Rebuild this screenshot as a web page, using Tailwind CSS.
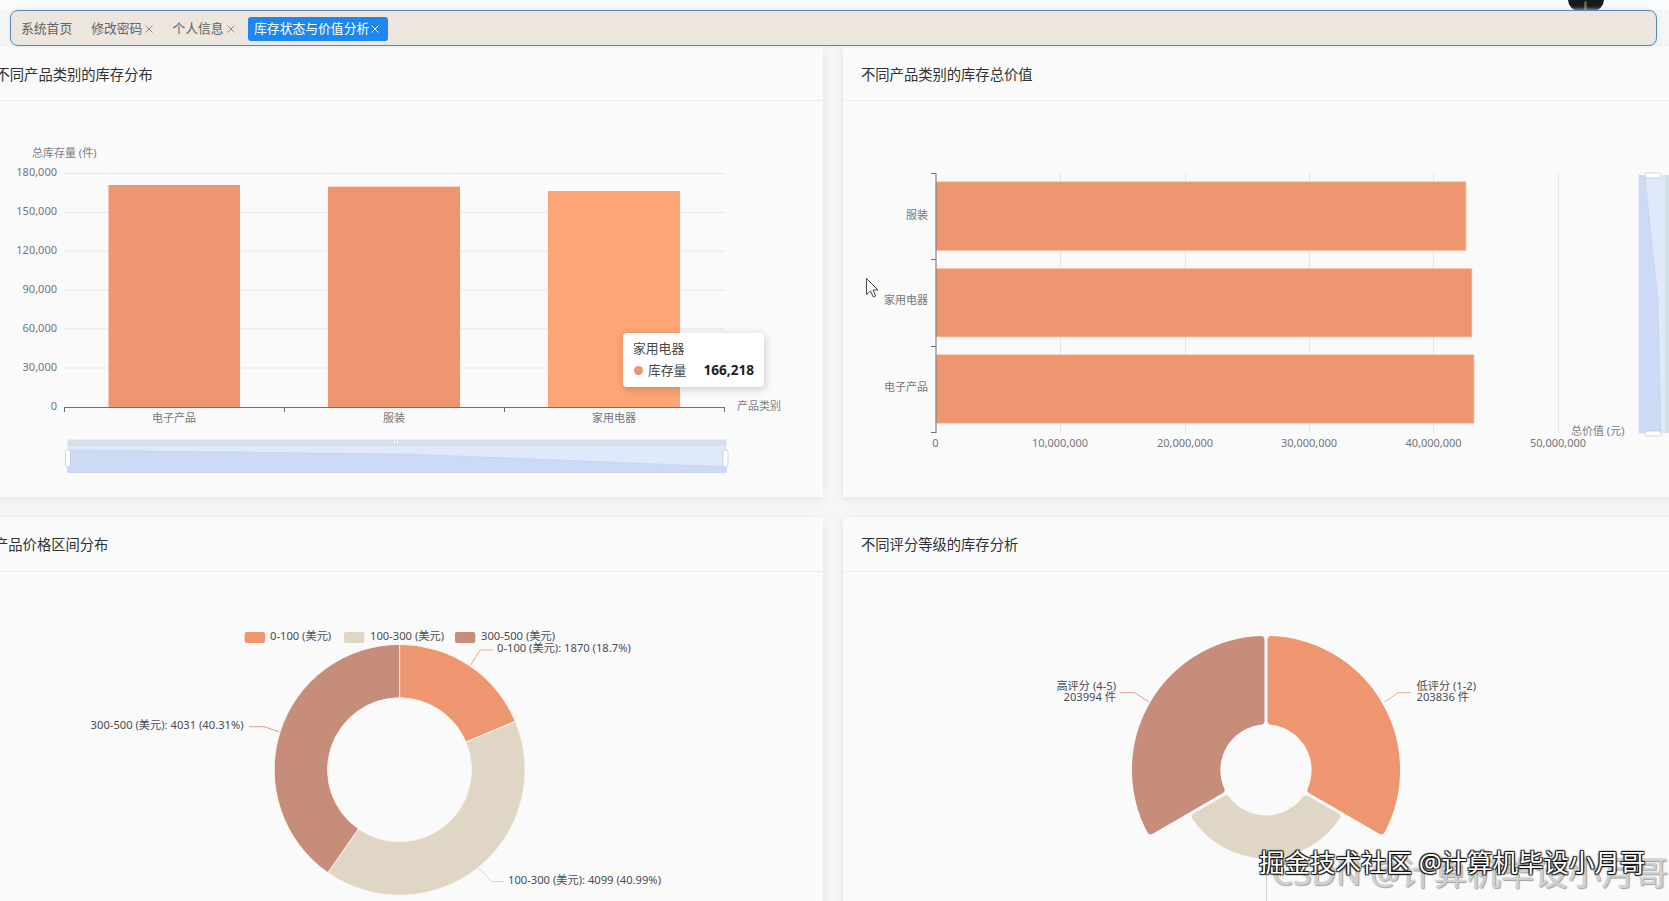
<!DOCTYPE html>
<html lang="zh-CN">
<head>
    <meta charset="UTF-8">
    <title>库存状态与价值分析</title>
    <script src="https://cdn.jsdelivr.net/npm/@tailwindcss/browser@4"></script>
</head>
<body class="relative h-[901px] w-[1669px] overflow-hidden bg-[#f6f6f6] font-['Noto_Sans','Noto_Sans_CJK_SC',sans-serif]">
    <!-- Avatar peeking out above the tab bar -->
    <div class="absolute left-[1568px] top-[-12px] h-[23px] w-[36px] rounded-full bg-[#17191a]"></div>
    <div class="absolute left-[1584px] top-[1px] h-[9px] w-[3px] rounded-full bg-[#5c6248]"></div>

    <!-- Tab bar -->
    <div class="h-[10px] bg-[#f9fbfd]"></div>
    <nav class="relative z-10 ml-[10px] flex h-[36px] w-[1647px] items-center gap-[7px] rounded-lg border border-[#5f86b5] bg-[#ece6de] pl-[4px] pt-[1px] text-[12.8px] text-[#5f6368] shadow-[0_0_4px_#d3e6f6]">
        <span class="px-[6px]">系统首页</span>
        <span class="flex items-center gap-[3px] px-[6px]">修改密码
            <svg class="h-[8px] w-[8px]" viewBox="0 0 8 8"><path d="M0.5 0.5 7.5 7.5M7.5 0.5 0.5 7.5" stroke="#8a8d91"/></svg>
        </span>
        <span class="flex items-center gap-[3px] px-[6px]">个人信息
            <svg class="h-[8px] w-[8px]" viewBox="0 0 8 8"><path d="M0.5 0.5 7.5 7.5M7.5 0.5 0.5 7.5" stroke="#8a8d91"/></svg>
        </span>
        <span class="flex h-[24px] items-center gap-[2px] rounded-[3px] bg-[#1b87ef] pl-[6.5px] pr-[8.5px] text-white">库存状态与价值分析
            <svg class="h-[8px] w-[8px]" viewBox="0 0 8 8"><path d="M0.5 0.5 7.5 7.5M7.5 0.5 0.5 7.5" stroke="#ffffff"/></svg>
        </span>
    </nav>

    <!-- Cards -->
    <main class="ml-[-20px] grid w-[1706px] grid-cols-[843px_843px] grid-rows-[451px_451px] gap-[20px]">
        <!-- Stock by category -->
        <section class="relative bg-[#fafafa] shadow-[0_2px_8px_rgba(0,0,0,0.08)]">
            <h2 class="flex h-[55px] items-center border-b border-[#ebeef5] pl-[15.5px] pt-[4px] text-[14.3px] font-normal text-[#303133]">不同产品类别的库存分布</h2>
            <svg class="block text-[11px]" width="843" height="396" viewBox="-20 101 843 396">
                <path d="M64 173.500H724.500M64 212.500H724.500M64 251H724.500M64 290H724.500M64 329H724.500M64 368H724.500" stroke="#e3e8f1"/>
                <rect x="108.500" y="185" width="131.500" height="222" fill="#ee9670"/>
                <rect x="328" y="186.700" width="132" height="220.300" fill="#ee9670"/>
                <rect x="548" y="191" width="132" height="216" fill="#fda576"/>
                <path d="M64 407.500H724.500M64.500 407V412M284.500 407V412M504.500 407V412M724.500 407V412" stroke="#6e7079" fill="none"/>
                <g fill="#74767d" text-anchor="end" dominant-baseline="central">
                    <text x="57" y="171">180,000</text>
                    <text x="57" y="210">150,000</text>
                    <text x="57" y="249">120,000</text>
                    <text x="57" y="288">90,000</text>
                    <text x="57" y="327">60,000</text>
                    <text x="57" y="366">30,000</text>
                    <text x="57" y="405">0</text>
                </g>
                <g fill="#74767d" text-anchor="middle" dominant-baseline="central">
                    <text x="174" y="417">电子产品</text>
                    <text x="394" y="417">服装</text>
                    <text x="614" y="417">家用电器</text>
                </g>
                <g fill="#7c7e85" dominant-baseline="central">
                    <text x="32" y="152">总库存量 (件)</text>
                    <text x="737" y="405">产品类别</text>
                </g>
                <!-- Data zoom -->
                <rect x="67.500" y="439.500" width="659" height="7" fill="#d5deeb"/>
                <rect x="67.500" y="446.500" width="659" height="26" fill="#e0e9f9"/>
                <path d="M67.500 450 415 454.300 726.500 466.700V472.500H67.500Z" fill="#ccdaf5" stroke="#bccdee" stroke-width="0.5"/>
                <rect x="65.500" y="450" width="5" height="17" rx="2" fill="#ffffff" stroke="#b9c6de" stroke-width="0.7"/>
                <rect x="723" y="450" width="5" height="17" rx="2" fill="#ffffff" stroke="#b9c6de" stroke-width="0.7"/>
                <path d="M394.500 441V444M397.500 441V444" stroke="#ffffff"/>
            </svg>
            <!-- Tooltip -->
            <div class="absolute left-[643px] top-[287px] h-[54px] w-[141px] rounded-[4px] bg-white px-[10px] pt-[5px] text-[12.8px] text-[#464646] shadow-[1px_2px_10px_rgba(0,0,0,0.2)]">
                <div class="leading-[20px]">家用电器</div>
                <div class="mt-[2px] flex items-center leading-[20px]">
                    <span class="ml-[1px] mr-[5px] h-[9px] w-[9px] rounded-full bg-[#ee9670]"></span>
                    <span>库存量</span>
                    <span class="ml-auto text-[13.6px] font-bold text-[#222]">166,218</span>
                </div>
            </div>
        </section>

        <!-- Value by category -->
        <section class="bg-[#fafafa] shadow-[0_2px_8px_rgba(0,0,0,0.08)]">
            <h2 class="flex h-[55px] items-center border-b border-[#ebeef5] pl-[18px] pt-[4px] text-[14.3px] font-normal text-[#303133]">不同产品类别的库存总价值</h2>
            <svg class="block text-[11px]" width="843" height="396" viewBox="843 101 843 396">
                <path d="M1060.500 173V433M1185.500 173V433M1309.500 173V433M1433.500 173V433M1558.500 173V433" stroke="#e3e5ea"/>
                <rect x="936" y="181.700" width="530" height="69" fill="#ee9670" stroke="#f8cdb9" stroke-width="0.7"/>
                <rect x="936" y="268.300" width="536" height="68.700" fill="#ee9670" stroke="#f8cdb9" stroke-width="0.7"/>
                <rect x="936" y="354.700" width="538" height="68.600" fill="#ee9670" stroke="#f8cdb9" stroke-width="0.7"/>
                <path d="M936 173V433M931 173.500H936M931 259.500H936M931 346.500H936M931 432.500H936" stroke="#6e7079" fill="none"/>
                <g fill="#74767d" text-anchor="end" dominant-baseline="central">
                    <text x="928" y="214.500">服装</text>
                    <text x="928" y="299.500">家用电器</text>
                    <text x="928" y="386.500">电子产品</text>
                </g>
                <g fill="#74767d" text-anchor="middle" dominant-baseline="central">
                    <text x="935.500" y="442">0</text>
                    <text x="1060" y="442">10,000,000</text>
                    <text x="1185" y="442">20,000,000</text>
                    <text x="1309" y="442">30,000,000</text>
                    <text x="1433.500" y="442">40,000,000</text>
                    <text x="1558" y="442">50,000,000</text>
                </g>
                <text x="1571" y="430" fill="#7c7e85" dominant-baseline="central">总价值 (元)</text>
                <!-- Data zoom -->
                <rect x="1639" y="175" width="26" height="258" fill="#e0e9f9"/>
                <rect x="1665" y="175" width="6" height="258" fill="#d5deeb"/>
                <path d="M1645 177 1658 300 1661 433H1639V175Z" fill="#ccdaf5" stroke="#bccdee" stroke-width="0.5"/>
                <rect x="1645" y="173" width="16" height="5" rx="2" fill="#ffffff" stroke="#b9c6de" stroke-width="0.7"/>
                <rect x="1645" y="431" width="16" height="5" rx="2" fill="#ffffff" stroke="#b9c6de" stroke-width="0.7"/>
            </svg>
        </section>

        <!-- Price ranges -->
        <section class="bg-[#fafafa] shadow-[0_2px_8px_rgba(0,0,0,0.08)]">
            <h2 class="flex h-[55px] items-center border-b border-[#ebeef5] pl-[14px] pt-[2px] text-[14.3px] font-normal text-[#303133]">产品价格区间分布</h2>
            <svg class="block text-[11.2px]" width="843" height="396" viewBox="-20 572 843 396">
                <g stroke="#fdf3e9">
                    <path d="M399.600 644.400A125.400 125.400 0 0 1 515.300 721.450L466 742.040A72 72 0 0 0 399.600 697.800Z" fill="#ee9670"/>
                    <path d="M515.300 721.450A125.400 125.400 0 0 1 327.900 872.700L358.400 828.860A72 72 0 0 0 466 742.040Z" fill="#e0d6c6"/>
                    <path d="M327.900 872.700A125.400 125.400 0 0 1 399.600 644.400V697.800A72 72 0 0 0 358.400 828.860Z" fill="#c78d7b"/>
                </g>
                <rect x="244.700" y="632" width="20.300" height="11" rx="2" fill="#ee9670"/>
                <rect x="344" y="632" width="20.300" height="11" rx="2" fill="#e0d6c6"/>
                <rect x="455" y="632" width="20.300" height="11" rx="2" fill="#c78d7b"/>
                <g fill="#4a4c52" dominant-baseline="central">
                    <text x="270" y="635">0-100 (美元)</text>
                    <text x="370" y="635">100-300 (美元)</text>
                    <text x="481" y="635">300-500 (美元)</text>
                    <text x="497" y="647">0-100 (美元): 1870 (18.7%)</text>
                    <text x="243.600" y="724" text-anchor="end">300-500 (美元): 4031 (40.31%)</text>
                    <text x="508" y="879">100-300 (美元): 4099 (40.99%)</text>
                </g>
                <g fill="none" stroke-width="0.8">
                    <path d="M470.700 665 480 650H493.600" stroke="#ee9670"/>
                    <path d="M279 731.700 264 726.700H249" stroke="#c78d7b"/>
                    <path d="M478.700 868 492 881.700H504" stroke="#d2c8b8"/>
                </g>
            </svg>
        </section>

        <!-- Rating levels -->
        <section class="bg-[#fafafa] shadow-[0_2px_8px_rgba(0,0,0,0.08)]">
            <h2 class="flex h-[55px] items-center border-b border-[#ebeef5] pl-[18px] pt-[2px] text-[14.3px] font-normal text-[#303133]">不同评分等级的库存分析</h2>
            <svg class="block text-[11.2px]" width="843" height="396" viewBox="843 572 843 396">
                <g stroke-width="8" stroke-linejoin="round">
                    <path d="M1271.500 640.100A130 130 0 0 1 1381.250 830.200L1311.450 789.900A49.600 49.600 0 0 0 1271.500 720.700Z" fill="#ee9670" stroke="#ee9670"/>
                    <path d="M1260.500 640.100A130 130 0 0 0 1150.750 830.200L1220.550 789.900A49.600 49.600 0 0 1 1260.500 720.700Z" fill="#c78d7b" stroke="#c78d7b"/>
                    <path d="M1305.950 799.400 1336.100 816.800A84.300 84.300 0 0 1 1195.900 816.800L1226.050 799.400A49.600 49.600 0 0 0 1305.950 799.400Z" fill="#e0d6c6" stroke="#e0d6c6"/>
                </g>
                <g fill="#4a4c52">
                    <text x="1416.500" y="690">低评分 (1-2)</text>
                    <text x="1416.500" y="701">203836 件</text>
                    <text x="1116" y="690" text-anchor="end">高评分 (4-5)</text>
                    <text x="1116" y="701" text-anchor="end">203994 件</text>
                </g>
                <g fill="none" stroke-width="0.8">
                    <path d="M1384.500 702 1398 692.700H1411" stroke="#ee9670"/>
                    <path d="M1149 702 1134.500 692.700H1120" stroke="#c78d7b"/>
                    <path d="M1266.500 858V901" stroke="#c9c9c9"/>
                </g>
            </svg>
        </section>
    </main>

    <!-- Mouse cursor from the recording -->
    <svg class="absolute left-[866px] top-[278px]" width="13" height="20" viewBox="0 0 13 20">
        <path d="M0.500 0.500V16.500L4.500 13 7.300 19 9.700 17.900 7 12H12Z" fill="#ffffff" stroke="#333333" stroke-width="0.9"/>
    </svg>

    <!-- Video watermarks -->
    <div class="absolute left-[1272px] top-[850px] whitespace-nowrap text-[33.5px] leading-[44px] text-white/60 [text-shadow:0_0_1px_#8a8a8a,1px_1px_1px_#a5a5a5]">CSDN @计算机毕设小月哥</div>
    <div class="absolute left-[1259px] top-[844px] whitespace-nowrap text-[25.5px] leading-[36px] text-white [text-shadow:1px_1px_1px_#111,-1px_-1px_1px_#111,1px_-1px_1px_#111,-1px_1px_1px_#111]">掘金技术社区 @计算机毕设小月哥</div>
</body>
</html>
